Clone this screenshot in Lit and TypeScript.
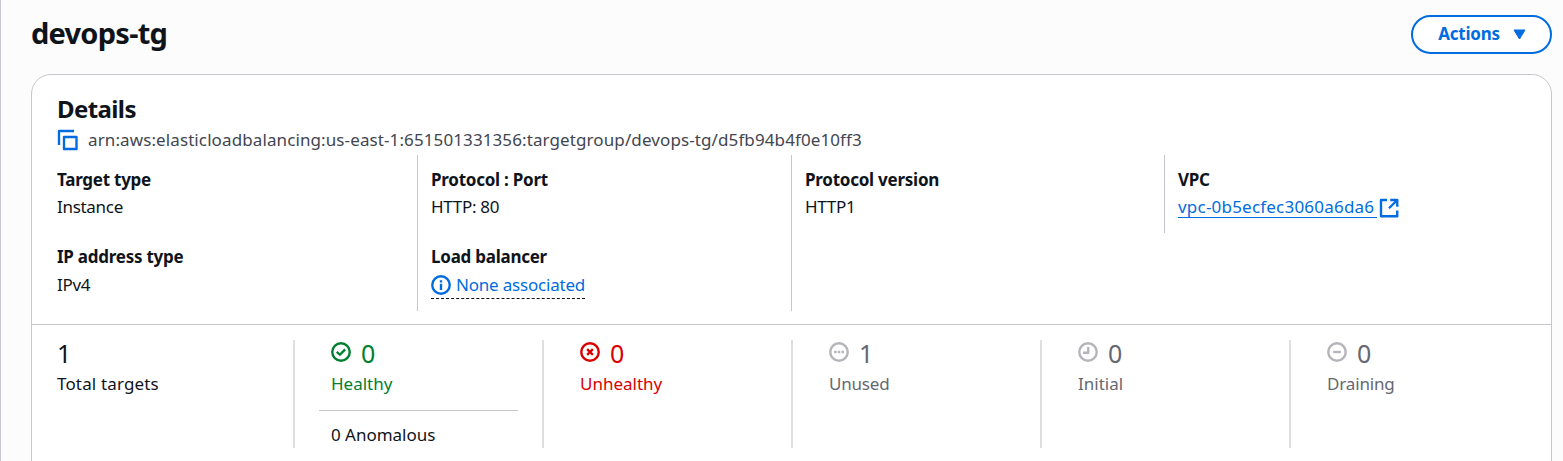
import { LitElement, html, svg, css, nothing } from "lit";
import { customElement, property } from "lit/decorators.js";
import { classMap } from "lit/directives/class-map.js";

const glyphs: Record<string, unknown> = {
  healthy: svg`<circle cx="8" cy="8" r="7"/><path d="M4.6 7.9l2.5 2.3 4.2-4.3"/>`,
  unhealthy: svg`<circle cx="8" cy="8" r="7"/><path d="M5.7 5.7l4.6 4.6M10.3 5.7l-4.6 4.6"/>`,
  unused: svg`<circle cx="8" cy="8" r="7"/><path d="M4 8h2M7 8h2M10 8h2"/>`,
  initial: svg`<circle cx="8" cy="8" r="7"/><path d="M8.2 4v4.6H4"/>`,
  draining: svg`<circle cx="8" cy="8" r="7"/><path d="M4.9 8h6.2"/>`,
  info: svg`<circle cx="8" cy="8" r="7"/><path d="M8 7v4.9M8 4.1v1.8"/>`,
  copy: svg`<path d="M1.6 12V.8H13.6"/><path d="M5.6 5.6h10v9.6h-10z"/>`,
  external: svg`<path d="M6.4 1.6H1.6v13h13V10M9 1.6h5.6V7M14.4 1.8L8 8.2"/>`,
};

@customElement("ui-icon")
export class UiIcon extends LitElement {
  @property() name = "info";
  static styles = css`
    :host { display: block; flex: none; width: 20px; height: 20px; }
    .glyph { display: block; width: 100%; height: 100%; overflow: visible; fill: none; stroke: currentColor; stroke-width: 1.9; stroke-linejoin: round; }
  `;
  render() {
    return html`<svg class="glyph" viewBox="0 0 16 16">${glyphs[this.name]}</svg>`;
  }
}

interface Stat { icon: string; count: number; label: string; tone: string; note?: string }

const stats: Stat[] = [
  { icon: "", count: 1, label: "Total targets", tone: "total" },
  { icon: "healthy", count: 0, label: "Healthy", tone: "healthy", note: "0 Anomalous" },
  { icon: "unhealthy", count: 0, label: "Unhealthy", tone: "unhealthy" },
  { icon: "unused", count: 1, label: "Unused", tone: "unused muted" },
  { icon: "initial", count: 0, label: "Initial", tone: "initial muted" },
  { icon: "draining", count: 0, label: "Draining", tone: "draining muted" },
];

@customElement("app-root")
export class AppRoot extends LitElement {
  static styles = css`
    :host { display: block; height: 461px; overflow: hidden; }
    * { box-sizing: border-box; }
    .page { height: 461px; overflow: hidden; background: #fcfcfd; border-left: 1px solid #c6c6cd; padding: 15px 11px 0 30px;
      font: 17px/25px "Noto Sans", "Open Sans", sans-serif; color: #0f141a; letter-spacing: -0.3px; white-space: nowrap; }
    .header { display: flex; justify-content: space-between; height: 39px; }
    .title { margin: 0; font-size: 29px; line-height: 36px; font-weight: 700; letter-spacing: -0.75px; }
    .actions { display: flex; align-items: center; justify-content: center; gap: 13px; width: 141px; height: 39px; padding: 0 0 2px 1px; border: 2px solid #006ce0; border-radius: 20px;
      background: #fff; color: #006ce0; font: 700 17px/25px "Noto Sans", sans-serif; letter-spacing: -0.25px; }
    .caret { width: 13px; height: 11px; margin-top: 1px; fill: currentColor; stroke: currentColor; stroke-linejoin: round; }
    .card { height: 420px; margin-top: 20px; background: #fff; border: 1px solid #c6c6cd; border-radius: 20px; }
    .card-head { padding: 19px 25px 0; height: 80px; }
    .heading { margin: 0; font-size: 24px; line-height: 30px; font-weight: 700; letter-spacing: -0.6px; }
    .arn { display: flex; align-items: center; gap: 11px; height: 30px; color: #424650; letter-spacing: 0.105px; }
    .arn ui-icon { color: #006ce0; margin-top: 1px; }
    .fields { display: grid; grid-template-columns: 373px 374px 373px 374px; align-items: start; height: 169px; padding-left: 12px; }
    .col { display: grid; grid-template-rows: 77px 79px; padding-left: 13px; }
    .col + .col { border-left: 1px solid #c6c6cd; }
    .col.short { grid-template-rows: 78px; }
    .field { padding-top: 11px; }
    .name { font-weight: 700; line-height: 27px; letter-spacing: -0.25px; }
    .value { line-height: 28px; height: 28px; }
    .field + .field .value { margin-top: 1px; }
    .link { display: flex; height: 26px; color: #006ce0; letter-spacing: 0.21px; }
    .link ui-icon { margin: 5px 0 0 2px; }
    .link-text { height: 25px; line-height: 28px; border-bottom: 1px solid currentColor; padding-right: 3px; }
    .popover { display: inline-flex; align-items: center; gap: 5px; height: 28px; color: #006ce0; border-bottom: 1px dashed #0f141a; letter-spacing: -0.2px; }
    .stats { display: grid; grid-template-columns: repeat(6, 249px); padding: 15px 0 0 12px; border-top: 1px solid #c6c6cd; }
    .stat { height: 108px; padding-left: 36px; border-left: 2px solid #dedee3; }
    .stat.total { padding-left: 13px; border-left: 0; }
    .total .label { letter-spacing: 0.15px; }
    .top { display: flex; gap: 10px; height: 31px; }
    .top ui-icon { margin-top: 2px; }
    .count { font-size: 25px; line-height: 27px; }
    .label { line-height: 26px; letter-spacing: 0; }
    .unused .label { letter-spacing: -0.2px; }
    .draining .label { letter-spacing: -0.15px; }
    .healthy { color: #00802f; }
    .unhealthy { color: #db0000; }
    .muted { color: #656871; }
    .muted ui-icon { color: #b4b4bb; }
    .stat.healthy, .stat.unhealthy, .stat.muted { border-color: #dedee3; }
    .note { margin: 13px 24px 0 -12px; padding: 11px 0 0 12px; border-top: 1px solid #c6c6cd; color: #0f141a; letter-spacing: -0.02px; }
  `;

  private field(name: string, value: unknown) {
    return html`<div class="field"><div class="name">${name}</div><div class="value">${value}</div></div>`;
  }

  private stat(s: Stat) {
    const classes: Record<string, boolean> = { stat: true };
    s.tone.split(" ").forEach((t) => (classes[t] = true));
    return html`<div class=${classMap(classes)}>
      <div class="top">${s.icon ? html`<ui-icon name=${s.icon}></ui-icon>` : nothing}<span class="count">${s.count}</span></div>
      <div class="label">${s.label}</div>
      ${s.note ? html`<div class="note">${s.note}</div>` : nothing}
    </div>`;
  }

  render() {
    return html`<main class="page">
      <header class="header">
        <h1 class="title">devops-tg</h1>
        <button class="actions">Actions<svg class="caret" viewBox="0 0 13 11"><path d="M1 1h11L6.5 10z"/></svg></button>
      </header>
      <section class="card">
        <div class="card-head">
          <h2 class="heading">Details</h2>
          <div class="arn"><ui-icon name="copy"></ui-icon><span class="arn-text">arn:aws:elasticloadbalancing:us-east-1:651501331356:targetgroup/devops-tg/d5fb94b4f0e10ff3</span></div>
        </div>
        <div class="fields">
          <div class="col">${this.field("Target type", "Instance")}${this.field("IP address type", "IPv4")}</div>
          <div class="col">${this.field("Protocol : Port", "HTTP: 80")}${this.field("Load balancer", html`<span class="popover"><ui-icon name="info"></ui-icon><span>None associated</span></span>`)}</div>
          <div class="col">${this.field("Protocol version", "HTTP1")}</div>
          <div class="col short">${this.field("VPC", html`<span class="link"><span class="link-text">vpc-0b5ecfec3060a6da6</span><ui-icon name="external"></ui-icon></span>`)}</div>
        </div>
        <div class="stats">${stats.map((s) => this.stat(s))}</div>
      </section>
    </main>`;
  }
}
